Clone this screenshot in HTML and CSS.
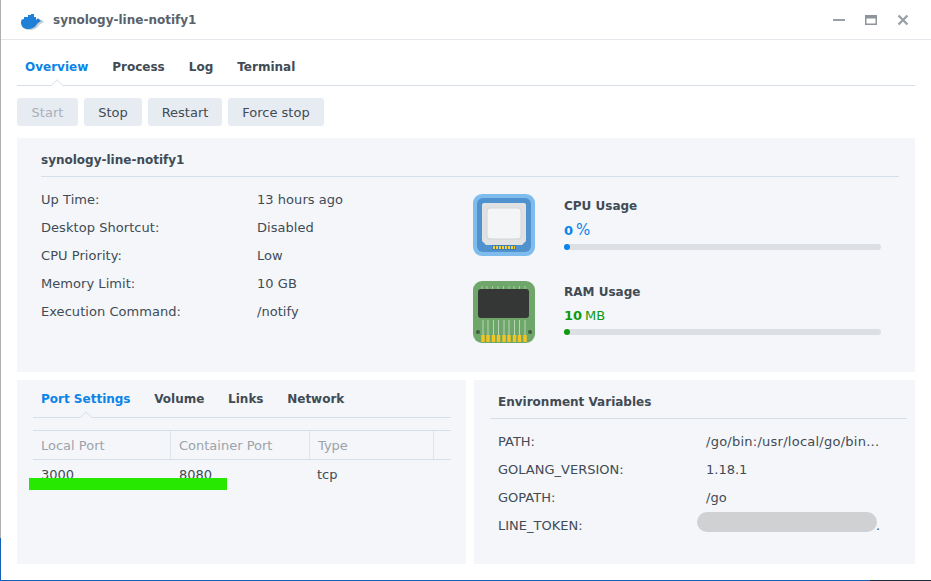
FILE: index.html
```html
<!DOCTYPE html>
<html lang="en">

<head>
    <meta charset="UTF-8">
    <title>synology-line-notify1</title>
    <link rel="stylesheet" href="styles.css">
</head>

<body>
    <div class="window">
        <div class="titlebar">
            <svg class="app-icon" width="26" height="22" viewBox="0 0 26 22">
                <path d="M3 14h15c1-2 3-4 5-3l2 2c-2 1-4 2-5 3-2 4-6 5-10 5-5 0-7-3-7-7z" fill="#c9ced3" />
                <path d="M2 13C2 11 3 10 5 10V8H9V6H12V5H15V8H17V11C18 10 19 9 20 10L22 12C20 13 19 14 18 15 16 19 12 20 9 20 5 20 2 18 2 13z" fill="#1f80d6" />
            </svg>
            <span class="app-title">synology-line-notify1</span>
            <div class="window-controls">
                <svg width="12" height="12" viewBox="0 0 12 12">
                    <rect x="0" y="5" width="12" height="2" fill="#9aa0a8" />
                </svg>
                <svg width="12" height="12" viewBox="0 0 12 12">
                    <path d="M0 1h12v10H0zM1.500 4.500v5h9v-5z" fill="#8e949c" fill-rule="evenodd" />
                </svg>
                <svg width="12" height="12" viewBox="0 0 12 12">
                    <path d="M1.500 1.500l9 9M10.500 1.500l-9 9" stroke="#9aa0a8" stroke-width="2.400" />
                </svg>
            </div>
        </div>

        <div class="content">
            <div class="tabs main-tabs">
                <span class="tab active">Overview</span>
                <span class="tab">Process</span>
                <span class="tab">Log</span>
                <span class="tab">Terminal</span>
            </div>

            <div class="toolbar">
                <button class="btn btn-start" disabled>Start</button>
                <button class="btn btn-stop">Stop</button>
                <button class="btn btn-restart">Restart</button>
                <button class="btn btn-force">Force stop</button>
            </div>

            <div class="panel overview">
                <h3 class="panel-title">synology-line-notify1</h3>
                <div class="overview-body">
                    <div class="info-list">
                        <div class="info-row"><span class="info-label">Up Time:</span><span>13 hours ago</span></div>
                        <div class="info-row"><span class="info-label">Desktop Shortcut:</span><span>Disabled</span></div>
                        <div class="info-row"><span class="info-label">CPU Priority:</span><span>Low</span></div>
                        <div class="info-row"><span class="info-label">Memory Limit:</span><span>10 GB</span></div>
                        <div class="info-row"><span class="info-label">Execution Command:</span><span>/notify</span></div>
                    </div>
                    <div class="usage-list">
                        <div class="usage usage-cpu">
                            <svg class="usage-icon" width="62" height="62" viewBox="0 0 62 62">
                                <rect width="62" height="62" rx="9" fill="#7dbcec" />
                                <rect x="4" y="4" width="54" height="54" rx="6" fill="#4f92cd" />
                                <path d="M9 11a2 2 0 0 1 2-2h40a2 2 0 0 1 2 2v36l-4 4H13l-4-4z" fill="#dfe1e3" />
                                <rect x="14" y="14" width="34" height="31" rx="3" fill="#f4f5f6" stroke="#d2d5d8" />
                                <rect x="19" y="51" width="24" height="5" fill="#3f7fb8" />
                                <path d="M20 53.500h22" stroke="#f3cf3a" stroke-width="3" stroke-dasharray="2 1" />
                            </svg>
                            <div class="usage-info">
                                <div class="usage-name">CPU Usage</div>
                                <div class="usage-value cpu"><b>0</b><span class="percent">%</span></div>
                                <div class="bar"><div class="bar-fill cpu-fill"></div></div>
                            </div>
                        </div>
                        <div class="usage usage-ram">
                            <svg class="usage-icon" width="62" height="62" viewBox="0 0 62 62">
                                <rect width="62" height="62" rx="9" fill="#6fa76a" />
                                <path d="M9 5v4M14 5v4M19.500 5v4M25 5v4M30.500 5v4M36 5v4M41 5v4M46.500 5v4M52 5v4" stroke="#a9cba5" />
                                <rect x="5" y="8" width="51" height="29" rx="3" fill="#343735" />
                                <path d="M10 39v15M15 39v15M20.500 39v15M25.500 39v15M31 39v15M36 39v15M41.500 39v15M46.500 39v15M52 39v15" stroke="#b9d4b5" />
                                <path d="M10 54v7M15 54v7M20.500 54v7M25.500 54v7M31 54v7M36 54v7M41.500 54v7M46.500 54v7M52 54v7" stroke="#f5c322" stroke-width="3.400" />
                                <circle cx="5" cy="51" r="2" fill="#3f5d3d" />
                                <circle cx="57" cy="51" r="2" fill="#3f5d3d" />
                            </svg>
                            <div class="usage-info">
                                <div class="usage-name">RAM Usage</div>
                                <div class="usage-value ram"><b>10</b><span>MB</span></div>
                                <div class="bar"><div class="bar-fill ram-fill"></div></div>
                            </div>
                        </div>
                    </div>
                </div>
            </div>

            <div class="lower">
                <div class="panel ports">
                    <div class="tabs sub-tabs">
                        <span class="tab active">Port Settings</span>
                        <span class="tab">Volume</span>
                        <span class="tab">Links</span>
                        <span class="tab">Network</span>
                    </div>
                    <div class="port-table">
                        <div class="port-head">
                            <span class="col-local">Local Port</span>
                            <span class="col-container">Container Port</span>
                            <span class="col-type">Type</span>
                            <span class="col-rest"></span>
                        </div>
                        <div class="port-row">
                            <span class="col-local">3000</span>
                            <span class="col-container">8080</span>
                            <span class="col-type">tcp</span>
                        </div>
                        <div class="green-mark"></div>
                    </div>
                </div>
                <div class="panel env">
                    <h3 class="panel-title">Environment Variables</h3>
                    <div class="env-list">
                        <div class="env-row"><span class="env-name">PATH:</span><span class="env-path">/go/bin:/usr/local/go/bin...</span></div>
                        <div class="env-row"><span class="env-name">GOLANG_VERSION:</span><span>1.18.1</span></div>
                        <div class="env-row"><span class="env-name">GOPATH:</span><span>/go</span></div>
                        <div class="env-row"><span class="env-name">LINE_TOKEN:</span><span class="token-dot">.</span><span class="blur-mark"></span></div>
                    </div>
                </div>
            </div>
        </div>
    </div>
</body>

</html>
```

FILE: styles.css
```css
* {
    box-sizing: border-box;
}

body {
    margin: 0;
    height: 581px;
    overflow: hidden;
    background-color: #fff;
    font-family: "DejaVu Sans", sans-serif;
    font-size: 13px;
    color: #414b55;
}

/* left and bottom edges of the window change colour part way along */
.window {
    position: relative;
    width: 931px;
    height: 581px;
    padding-left: 1px;
}

.window::before {
    content: "";
    position: absolute;
    left: 0;
    top: 0;
    bottom: 0;
    width: 1px;
    background: linear-gradient(to bottom, #b0b0b0 538px, #1660b8 538px);
}

.window::after {
    content: "";
    position: absolute;
    left: 0;
    right: 0;
    top: 580px;
    height: 1px;
    background: linear-gradient(to right, #1660b8 870px, #1b2a3a 870px);
}

.titlebar {
    height: 40px;
    display: flex;
    align-items: center;
    padding: 0 22px 0 18px;
    border-bottom: 1px solid #e3e6ea;
}

.app-icon {
    margin-right: 8px;
}

.app-title {
    font-weight: bold;
    font-size: 12px;
    color: #5a626b;
}

.window-controls {
    margin-left: auto;
    display: flex;
    gap: 20px;
}

.content {
    padding: 0 16px;
}

.tabs {
    display: flex;
    border-bottom: 1px solid #d6dfe9;
    font-weight: bold;
    font-size: 12px;
}

.main-tabs {
    height: 46px;
    padding: 20px 0 0 8px;
    gap: 24px;
}

.tab {
    line-height: 15px;
}

.tab.active {
    color: #0a84e8;
    position: relative;
}

.tab.active::after {
    content: "";
    position: absolute;
    left: 50%;
    bottom: -6px;
    width: 9px;
    height: 9px;
    background-color: #fff;
    border-top: 1px solid #d6dfe9;
    border-left: 1px solid #d6dfe9;
    transform: translateX(-50%) rotate(45deg);
    clip-path: polygon(0 0, 100% 0, 0 100%);
}

.sub-tabs .tab.active::after {
    background-color: #f4f6f9;
}

.toolbar {
    display: flex;
    gap: 6px;
    margin-top: 12px;
}

.btn {
    height: 28px;
    padding: 0;
    border: none;
    border-radius: 3px;
    background-color: #e7ecf3;
    font-family: inherit;
    font-size: 13px;
    color: #414b55;
}

.btn:disabled {
    color: #a9b0b8;
}

.btn-start {
    width: 61px;
}

.btn-stop {
    width: 58px;
}

.btn-restart {
    width: 74px;
}

.btn-force {
    width: 96px;
}

.panel {
    background-color: #f4f6f9;
}

.overview {
    margin-top: 12px;
    height: 234px;
    padding: 0 16px 0 24px;
}

.panel-title {
    margin: 0;
    height: 39px;
    line-height: 45px;
    font-size: 12px;
    font-weight: bold;
    border-bottom: 1px solid #d6dfe9;
}

.overview-body {
    display: flex;
}

.info-list {
    width: 432px;
    padding-top: 9px;
    letter-spacing: 0.05px;
}

.info-row {
    display: flex;
    height: 28px;
    line-height: 28px;
}

.info-label {
    width: 216px;
}

.usage-list {
    padding-top: 17px;
}

.usage {
    display: flex;
    height: 87px;
}

.usage-info {
    margin-left: 29px;
    width: 317px;
}

.usage-name {
    font-weight: bold;
    font-size: 12px;
    margin-top: 3px;
    line-height: 16px;
}

.usage-cpu .usage-name {
    margin-top: 4px;
}

.usage-value {
    display: flex;
    align-items: baseline;
    gap: 3px;
    margin-top: 8px;
    line-height: 16px;
}

.usage-value .percent {
    font-size: 15px;
}

.usage-value.cpu {
    color: #0a84e8;
}

.usage-value.ram {
    color: #0f9a0f;
}

.bar {
    margin-top: 5px;
    height: 6px;
    border-radius: 3px;
    background-color: #dcdfe4;
}

.bar-fill {
    width: 6px;
    height: 6px;
    border-radius: 3px;
}

.cpu-fill {
    background-color: #0a84e8;
}

.ram-fill {
    background-color: #0f9a0f;
}

.lower {
    display: flex;
    gap: 8px;
    margin-top: 8px;
}

.ports {
    width: 449px;
    height: 184px;
    padding: 0 15px 0 16px;
}

.sub-tabs {
    height: 38px;
    padding: 12px 0 0 8px;
    gap: 23.700px;
}

.port-table {
    position: relative;
    margin-top: 12px;
}

.port-head {
    display: flex;
    height: 30px;
    line-height: 29px;
    color: #9ca3ab;
    border-top: 1px solid #d6dfe9;
    border-bottom: 1px solid #d6dfe9;
}

.port-head span {
    border-right: 1px solid #dfe5ec;
}

.port-head .col-rest {
    border-right: none;
}

.port-row {
    display: flex;
    height: 30px;
    line-height: 30px;
}

.col-local,
.col-container,
.col-type {
    padding-left: 8px;
}

.port-row .col-type {
    padding-left: 7px;
}

.col-local {
    width: 138px;
}

.col-container {
    width: 139px;
}

.col-type {
    width: 124px;
}

.col-rest {
    flex: 1;
}

.green-mark {
    position: absolute;
    left: -4px;
    top: 48px;
    width: 198px;
    height: 12px;
    background-color: #26e800;
}

.env {
    width: 441px;
    height: 184px;
    padding: 0 8px 0 24px;
}

.env .panel-title {
    margin-left: -8px;
    padding-left: 8px;
}

.env-list {
    padding-top: 9px;
}

.env-row {
    position: relative;
    display: flex;
    height: 28px;
    line-height: 28px;
}

.env-name {
    width: 208px;
}

.env-path {
    letter-spacing: 0.25px;
}

.token-dot {
    margin-left: 170px;
}

.blur-mark {
    position: absolute;
    left: 199px;
    top: 0;
    width: 180px;
    height: 20px;
    border-radius: 10px;
    background-color: #d0d1d3;
}
```
